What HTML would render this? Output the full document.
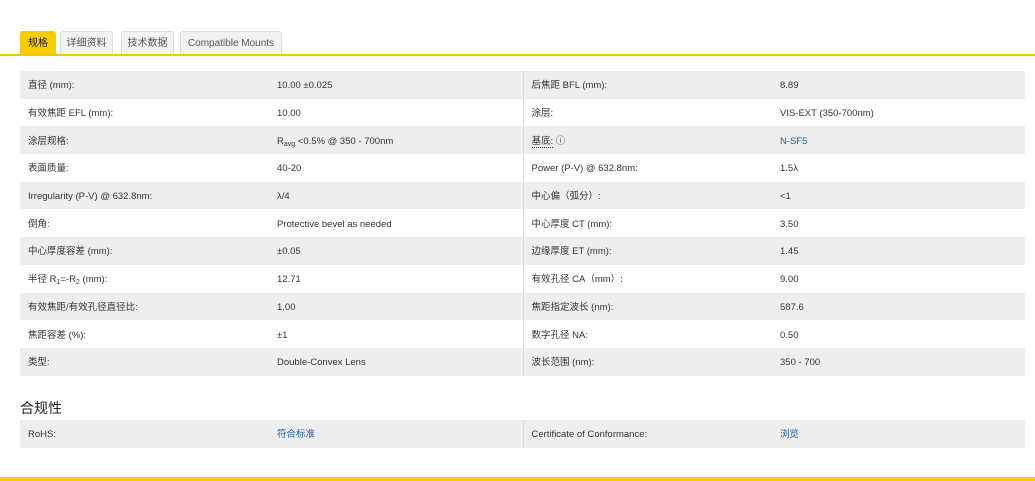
<html><head><style>
body{margin:0;width:1035px;height:481px;background:#fff;font-family:"Liberation Sans","Noto Sans CJK SC",sans-serif;color:#333;position:relative;overflow:hidden}
.tabs{position:absolute;left:20px;top:31px;height:24px}
.tab{position:absolute;top:0;height:23px;line-height:23px;font-size:10px;color:#555;background:#f2f2f2;border:1px solid #ddd;border-bottom:none;border-radius:3px 3px 0 0;text-align:center}
.line{position:absolute;left:0;top:54px;width:1035px;height:2px;background:#f4c800}
table{position:absolute;left:20px;border-collapse:collapse;width:1005px;font-size:9.5px;table-layout:fixed}
td{height:27.7px;padding:3px 0 0 8px;box-sizing:border-box;white-space:nowrap;vertical-align:middle;line-height:12px}
sub{line-height:0;font-size:7px;vertical-align:-2px}
tr:nth-child(odd) td{background:#eee}
td.c3{border-left:1px solid #ddd}
a{color:#1a5fa8;text-decoration:none}
h3{position:absolute;left:20px;top:398px;margin:0;font-size:14px;font-weight:normal;color:#222}
</style></head><body>
<div class="tabs">
<div class="tab" style="left:0;width:34px;background:#f7cc00;border-color:#f7cc00;color:#222;height:24px">规格</div>
<div class="tab" style="left:40px;width:51px">详细资料</div>
<div class="tab" style="left:101px;width:51px">技术数据</div>
<div class="tab" style="left:160px;width:100px">Compatible Mounts</div>
</div>
<div class="line"></div>
<table style="top:71px">
<col style="width:249px"><col style="width:254px"><col style="width:249px"><col>
<tr><td>直径 (mm):</td><td>10.00 ±0.025</td><td class="c3">后焦距 BFL (mm):</td><td>8.89</td></tr>
<tr><td>有效焦距 EFL (mm):</td><td>10.00</td><td class="c3">涂层:</td><td>VIS-EXT (350-700nm)</td></tr>
<tr><td>涂层规格:</td><td>R<sub>avg</sub> &lt;0.5% @ 350 - 700nm</td><td class="c3"><span style="border-bottom:1px dotted #333">基底:</span> ⓘ</td><td><a>N-SF5</a></td></tr>
<tr><td>表面质量:</td><td>40-20</td><td class="c3">Power (P-V) @ 632.8nm:</td><td>1.5λ</td></tr>
<tr><td>Irregularity (P-V) @ 632.8nm:</td><td>λ/4</td><td class="c3">中心偏（弧分）:</td><td>&lt;1</td></tr>
<tr><td>倒角:</td><td>Protective bevel as needed</td><td class="c3">中心厚度 CT (mm):</td><td>3.50</td></tr>
<tr><td>中心厚度容差 (mm):</td><td>±0.05</td><td class="c3">边缘厚度 ET (mm):</td><td>1.45</td></tr>
<tr><td>半径 R<sub>1</sub>=-R<sub>2</sub> (mm):</td><td>12.71</td><td class="c3">有效孔径 CA（mm）:</td><td>9.00</td></tr>
<tr><td>有效焦距/有效孔径直径比:</td><td>1.00</td><td class="c3">焦距指定波长 (nm):</td><td>587.6</td></tr>
<tr><td>焦距容差 (%):</td><td>±1</td><td class="c3">数字孔径 NA:</td><td>0.50</td></tr>
<tr><td>类型:</td><td>Double-Convex Lens</td><td class="c3">波长范围 (nm):</td><td>350 - 700</td></tr>
</table>
<h3>合规性</h3>
<table style="top:420px">
<col style="width:249px"><col style="width:254px"><col style="width:249px"><col>
<tr><td style="height:26px">RoHS:</td><td><a>符合标准</a></td><td class="c3">Certificate of Conformance:</td><td><a>浏览</a></td></tr>
</table>
<div style="position:absolute;left:0;top:477px;width:1035px;height:4px;background:#f7cc00"></div>
</body></html>
